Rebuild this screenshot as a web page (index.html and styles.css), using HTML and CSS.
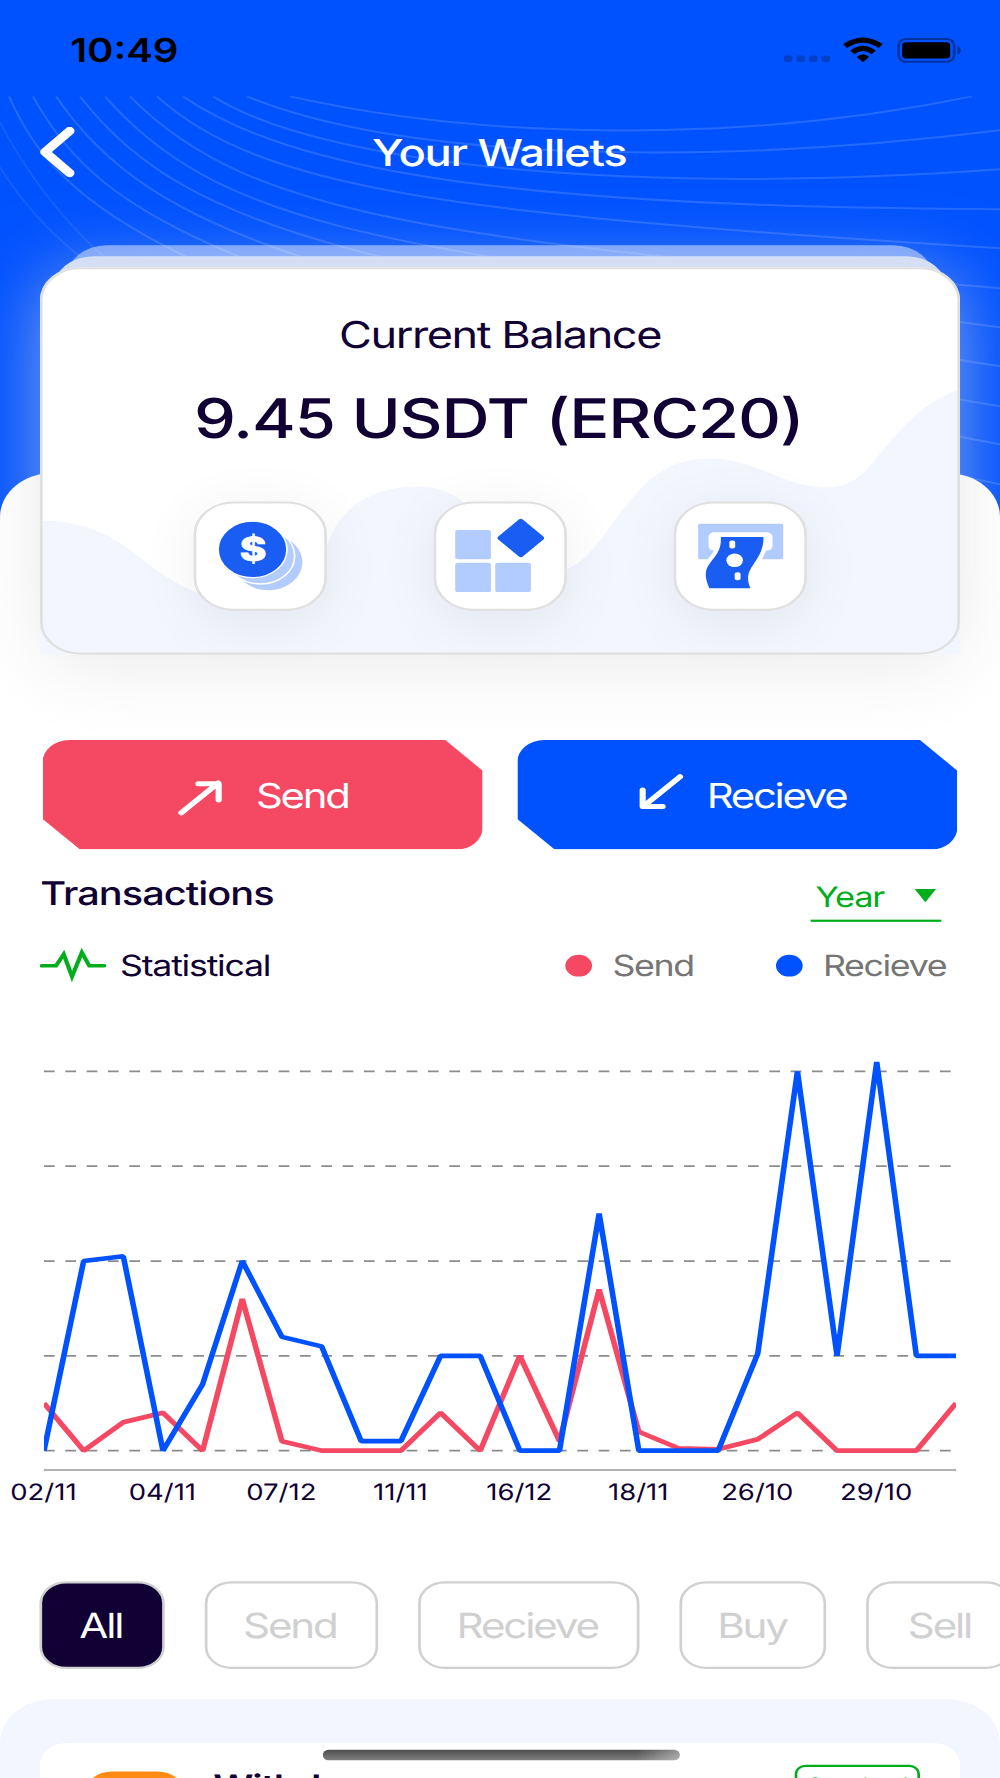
FILE: index.html
```html
<!DOCTYPE html>
<html lang="en">

<head>
    <meta charset="UTF-8">
    <meta name="viewport" content="width=device-width, initial-scale=1.0">
    <title>Your Wallets</title>

    <link rel="stylesheet" href="styles.css">
</head>

<body>
    <div class="app">
        <svg class="pattern" viewBox="0 97 1000 430" preserveAspectRatio="none">
            <path d="M290 97 C480 140 740 145 972 97" />
            <path d="M247 97 C400 160 700 168 1000 131" />
            <path d="M213 97 C330 170 650 195 1000 170" />
            <path d="M183 97 C290 170 500 208 1000 210" />
            <path d="M157 97 C260 190 450 215 1000 249" />
            <path d="M130 97 C250 220 450 240 1000 289" />
            <path d="M105 97 C230 240 420 250 1000 328" />
            <path d="M80 97 C190 240 380 270 1000 367" />
            <path d="M56 97 C150 235 320 290 1000 407" />
            <path d="M33 97 C100 220 230 300 1000 445" />
            <path d="M9 97 C60 210 160 310 1000 485" />
            <path class="faint" d="M0 123 C30 180 70 230 110 262" />
            <path class="faint" d="M0 168 C20 200 50 235 90 265" />
        </svg>

        <div class="statusbar">
            <span class="time">10:49</span>
            <svg class="status-icons" width="68" height="14" viewBox="0 0 68 14">
                <g opacity=".22">
                    <rect x="1" y="9.3" width="3.1" height="3" rx=".8" />
                    <rect x="5.7" y="9.3" width="3.1" height="3" rx=".8" />
                    <rect x="10.4" y="9.3" width="3.1" height="3" rx=".8" />
                    <rect x="15.1" y="9.3" width="3.1" height="3" rx=".8" />
                </g>
                <g fill="none" stroke="#000" stroke-width="2.3">
                    <path d="M23.9 5 Q30.6 -0.4 37.3 5" />
                    <path d="M26.6 7.9 Q30.6 4.3 34.6 7.9" />
                </g>
                <path d="M28.3 10 Q30.6 7.6 32.9 10 L30.6 12.4Z" />
                <rect x="44" y="1.8" width="20.8" height="10.4" rx="2.9" fill="none" stroke="#000" stroke-opacity=".38" />
                <rect x="45.3" y="3.3" width="18" height="7.4" rx="1.4" />
                <path d="M66 5 Q67.3 5.6 67.3 7 Q67.3 8.4 66 9Z" opacity=".4" />
            </svg>
        </div>

        <div class="nav">
            <svg class="back" width="14" height="24" viewBox="0 0.7 14 24">
                <path d="M11.1 2.5 L1.9 12.1 L11.1 21.7" />
            </svg>
            <span class="title">Your Wallets</span>
        </div>

        <div class="sheet">
            <!-- balance card -->
            <div class="stack">
                <div class="layer layer-back"></div>
                <div class="layer layer-mid"></div>
                <div class="card">
                    <svg class="wave" viewBox="0 0 920 269" preserveAspectRatio="none">
                        <path d="M0 135 C45 135 75 150 110 180 C140 203 180 220 220 220 C260 220 275 195 287 160 C300 120 335 101 377 101 C450 101 450 184 510 187 C570 187 580 73 668 73 C720 73 740 102 787 102 C840 102 840 35 920 3 V269 H0Z" />
                    </svg>
                    <div class="label">Current Balance</div>
                    <div class="amount">9.45 USDT (ERC20)</div>
                    <div class="tools">
                        <div class="tool">
                            <svg width="50" height="50" viewBox="-.4 0 50 50">
                                <circle class="light" cx="27.6" cy="27.8" r="12.8" />
                                <circle class="light ring" cx="24.7" cy="24.9" r="12.8" />
                                <circle class="dark ring" cx="21.7" cy="21.9" r="12.9" />
                                <text x="21.9" y="27.4" class="dollar">$</text>
                            </svg>
                        </div>
                        <div class="tool">
                            <svg width="50" height="50" viewBox="-.4 0 50 50">
                                <rect class="light" x="7.7" y="13" width="13.4" height="13.4" rx="1" />
                                <rect class="light" x="7.7" y="28" width="13.4" height="13.4" rx="1" />
                                <rect class="light" x="22.7" y="28" width="13.4" height="13.4" rx="1" />
                                <rect class="dark" x="25.8" y="10.2" width="13" height="13" rx="1.2" transform="rotate(45 32.3 16.7)" />
                            </svg>
                        </div>
                        <div class="tool">
                            <svg width="50" height="50" viewBox="-.4 0 50 50">
                                <rect class="light" x="8.8" y="10.2" width="31.9" height="16.2" rx=".7" />
                                <rect x="12.7" y="14.2" width="24" height="8.2" rx="2" fill="#fff" />
                                <path class="halo" d="M17.3 16.3 H33.3 C33.5 28 24.8 30 28.4 39.6 H13 C8.2 27 18 28 17.3 16.3Z" />
                                <rect x="14" y="14.2" width="21" height="2" fill="#fff" />
                                <path class="dark" d="M17.3 16.2 H33.3 C33.5 28 24.8 30 28.4 39.6 H13 C8.2 27 18 28 17.3 16.2Z" />
                                <g fill="#fff">
                                    <circle cx="22.5" cy="26.9" r="3.1" />
                                    <rect x="20.5" y="17.8" width="2.2" height="3.7" rx="1" />
                                    <rect x="22.5" y="32.3" width="2.2" height="3.7" rx="1" />
                                </g>
                            </svg>
                        </div>
                    </div>
                </div>
            </div>

            <div class="actions">
                <div class="action send">
                    <svg width="18" height="17" viewBox="0 0 18 17">
                        <path d="M2 15.2 L15.8 1.6 M8.4 1.9 H16 V9.4" />
                    </svg>
                    <span>Send</span>
                </div>
                <div class="action recieve">
                    <svg width="18" height="17" viewBox="0 0 18 17">
                        <path d="M16 1.7 L2.2 15.3 M2 7.8 V15.3 H9.5" />
                    </svg>
                    <span>Recieve</span>
                </div>
            </div>

            <div class="row head">
                <span class="heading">Transactions</span>
                <span class="select">
                    <span class="period">Year</span>
                    <i class="caret"></i>
                </span>
            </div>

            <div class="row legend">
                <svg class="pulse" width="25" height="16" viewBox="0 0 25 16">
                    <path d="M.7 8.1 H6 L8.9 2.8 L12 13 L15.7 2 L18.5 8.1 H24.1" />
                </svg>
                <span class="statistical">Statistical</span>
                <span class="key key-send"><i class="dot dot-send"></i><span>Send</span></span>
                <span class="key key-recieve"><i class="dot dot-recieve"></i><span>Recieve</span></span>
            </div>

            <svg class="chart" id="chart" width="375" height="210" viewBox="0 0 375 210"></svg>

            <div class="filters">
                <span class="chip all active">All</span>
                <span class="chip send-chip">Send</span>
                <span class="chip recieve-chip">Recieve</span>
                <span class="chip buy">Buy</span>
                <span class="chip sell">Sell</span>
            </div>

            <div class="history">
                <div class="item">
                    <div class="coin"></div>
                    <span class="type">Withdraw</span>
                    <span class="badge"><span>Completed</span></span>
                </div>
            </div>
        </div>

        <div class="home"></div>
    </div>

    <script>

        const chart = document.getElementById("chart");

        let recieve = [0, 40, 41, 0, 14, 40, 24, 22, 2, 2, 20, 20, 0, 0, 50, 0, 0, 0, 20.5, 80, 20, 82, 20, 20];
        let send = [10, 0, 6, 8, 0, 32, 2, 0, 0, 0, 8, 0, 20, 2, 34, 4, 0.5, 0.3, 2.4, 8, 0, 0, 0, 10];
        let labels = ["02/11", "04/11", "07/12", "11/11", "16/12", "18/11", "26/10", "29/10"];

        const left = 16.5;
        const step = 14.87;
        const base = 182.5;

        const y = (value) => base - value * 2.165;
        const points = (data) => data.map((v, i) => `${left + i * step},${y(v)}`).join(" ");

        let content = "";

        for (let v = 0; v <= 80; v += 20) {
            content += `<line class="grid" x1="${left}" x2="358.5" y1="${y(v)}" y2="${y(v)}" />`;
        }
        content += `<line class="axis" x1="${left}" x2="358.5" y1="191.3" y2="191.3" />`;

        content += `<clipPath id="plot"><rect x="${left}" y="0" width="342" height="210" /></clipPath>`;
        content += `<g clip-path="url(#plot)">`;
        content += `<polyline class="line line-send" points="${points(send)}" />`;
        content += `<polyline class="line line-recieve" points="${points(recieve)}" />`;
        content += `</g>`;

        // one label for every third point
        labels.forEach((label, i) => {
            content += `<text class="tick" x="${left - 0.2 + i * 3 * step}" y="205">${label}</text>`;
        });

        chart.innerHTML = content;

    </script>
</body>

</html>
```
FILE: styles.css
```css
* {
    box-sizing: border-box;
}

body {
    margin: 0;
    width: 1000px;
    height: 1778px;
    overflow: hidden;
    font-family: Inter, "Liberation Sans", sans-serif;
    text-rendering: geometricPrecision;
}

/* 375 x 812 screen stretched to the window */
.app {
    position: relative;
    width: 375px;
    height: 812px;
    overflow: hidden;
    background-color: #0052ff;
    color: #110033;
    transform: scale(2.66667, 2.18966);
    transform-origin: 0 0;
}

.pattern {
    position: absolute;
    top: 44.3px;
    left: 0;
    width: 375px;
    height: 196.4px;
    fill: none;
    stroke: rgba(255, 255, 255, 0.14);
    stroke-width: 2;
}

.faint {
    stroke: rgba(255, 255, 255, 0.08);
}

.statusbar {
    position: relative;
    height: 44px;
    display: flex;
    justify-content: space-between;
    padding: 0 14px 0 26.3px;
}

.time {
    color: #000;
    font-size: 15px;
    font-weight: 600;
    line-height: 46.8px;
    transform: translateY(0.5px);
}

.status-icons {
    margin-top: 16.3px;
}

.nav {
    position: relative;
    height: 51px;
    display: flex;
    align-items: center;
    justify-content: center;
}

.back {
    position: absolute;
    left: 15px;
    top: 13.7px;
    fill: none;
    stroke: #fff;
    stroke-width: 3.7;
    stroke-linecap: round;
    stroke-linejoin: round;
}

.title {
    margin-top: 1.2px;
    color: #fff;
    font-size: 17px;
    font-weight: 500;
    letter-spacing: -0.48px;
    transform: translate(-0.3px, 0.7px);
}

.sheet {
    position: relative;
    margin-top: 120.9px;
    height: 620px;
    background-color: #fff;
    border-radius: 20px 20px 0 0;
}

.stack {
    position: relative;
    top: -104px;
    margin: 0 15px -104px;
    padding-top: 10.5px;
}

.layer {
    position: absolute;
    height: 40px;
    border-radius: 15px;
}

.layer-back {
    top: 0;
    left: 10px;
    right: 10px;
    background-color: rgba(255, 255, 255, 0.47);
}

.layer-mid {
    top: 5px;
    left: 5px;
    right: 5px;
    background-color: #d3dffa;
}

.card {
    position: relative;
    isolation: isolate;
    height: 176.3px;
    padding: 1px;
    border-radius: 15px;
    background-color: #fff;
    box-shadow: 0 4px 30px rgba(220, 220, 220, 0.6);
    display: flex;
    flex-direction: column;
    align-items: center;
}

/* the outline stays above the wave, the wave keeps its square corners */
.card::after {
    content: "";
    position: absolute;
    inset: 0;
    border: 1px solid #e0e0e0;
    border-radius: 15px;
}

.wave {
    position: absolute;
    left: 0;
    bottom: 0;
    width: 345px;
    height: 122.9px;
    z-index: -1;
    fill: #f3f6ff;
}

.label {
    margin-top: 20.4px;
    height: 20px;
    font-size: 16.9px;
    line-height: 20px;
    letter-spacing: -0.53px;
    white-space: nowrap;
}

.amount {
    margin-top: 12.8px;
    height: 30px;
    font-size: 25px;
    font-weight: 500;
    line-height: 30px;
    letter-spacing: -0.43px;
    white-space: nowrap;
    transform: translate(-0.5px, 0.2px);
}

.tools {
    display: flex;
    gap: 40px;
    margin-top: 22.4px;
    transform: translateX(-0.4px);
}

.tool {
    width: 50px;
    height: 50px;
    border: 1px solid #e0e0e0;
    border-radius: 15px;
    background-color: #fff;
    box-shadow: 0 5px 25px rgba(0, 0, 0, 0.07);
}

.tool svg {
    display: block;
    margin: -1px;
}

.light {
    fill: #b3ccff;
}

.dark {
    fill: #195df2;
}

.ring {
    stroke: #fff;
    stroke-width: 0.6;
}

.halo {
    fill: #fff;
    stroke: #fff;
    stroke-width: 3.4;
}

.dollar {
    fill: #fff;
    font-size: 15.3px;
    font-weight: 900;
    text-anchor: middle;
}

.actions {
    display: flex;
    gap: 13px;
    margin-top: 39.3px;
    padding: 0 16px;
}

.action {
    width: 165px;
    height: 50px;
    display: flex;
    align-items: center;
    border-radius: 10px;
    clip-path: polygon(0 0, 151px 0, 100% 14px, 100% 100%, 14px 100%, 0 36px);
    color: #fff;
    font-size: 15.7px;
    letter-spacing: -0.84px;
}

.action span {
    padding-top: 2px;
}

.action svg {
    fill: none;
    stroke: #fff;
    stroke-width: 2.3;
    stroke-linecap: round;
    stroke-linejoin: round;
}

.send {
    background-color: #f54862;
    padding-left: 50px;
}

.send svg {
    margin: 4px 12px 0 0;
}

.recieve {
    background-color: #0052ff;
    padding-left: 45px;
}

.recieve svg {
    margin: -3px 8px 0 0;
}

.row {
    display: flex;
    align-items: center;
}

.head {
    justify-content: space-between;
    height: 33.5px;
    padding: 0 22px 0 15.1px;
}

.heading {
    margin-top: 5.6px;
    font-size: 14.9px;
    font-weight: 500;
    letter-spacing: -0.36px;
    transform: translateY(0.4px);
}

.select {
    display: flex;
    align-items: center;
    justify-content: space-between;
    width: 48.8px;
    height: 22px;
    margin-top: 10.6px;
    padding: 0 1.8px 2px 1.6px;
    border-bottom: 1px solid #00ae1c;
    color: #00ae1c;
    font-size: 12.9px;
    letter-spacing: -0.45px;
}

.period {
    margin-top: 3.4px;
}

.caret {
    border-left: 4.5px solid transparent;
    border-right: 4.5px solid transparent;
    border-top: 6px solid #00ae1c;
}

.legend {
    height: 39px;
    padding-left: 15px;
    font-size: 13.4px;
    letter-spacing: -0.5px;
}

.legend span span,
.statistical {
    padding-top: 1.6px;
    transform: translateY(-0.2px);
}

.pulse {
    fill: none;
    stroke: #00ae1c;
    stroke-width: 1.6;
    stroke-linecap: round;
}

.statistical {
    margin-left: 5px;
    width: 166.7px;
    letter-spacing: -0.46px;
}

.key {
    display: flex;
    align-items: center;
    color: #757575;
}

.key-send {
    width: 78.9px;
}

.dot {
    width: 10px;
    height: 10px;
    margin-right: 8px;
    border-radius: 50%;
}

.dot-send {
    background-color: #f54862;
}

.dot-recieve {
    background-color: #0052ff;
}

.chart {
    display: block;
    margin-top: 19.5px;
}

.grid {
    stroke: #8c8c8c;
    stroke-width: 0.8;
    stroke-dasharray: 4 4;
}

.axis {
    stroke: #b3b3b3;
    stroke-width: 0.9;
}

.line {
    fill: none;
    stroke-width: 2.1;
    stroke-linejoin: bevel;
}

.line-send {
    stroke: #f54862;
}

.line-recieve {
    stroke: #0052ff;
}

.tick {
    fill: #110033;
    font-size: 10.3px;
    text-anchor: middle;
}

.filters {
    display: flex;
    gap: 15px;
    margin-top: 32.4px;
    padding-left: 15px;
    transform: translate(-0.2px, 0.2px);
}

.chip {
    flex: none;
    height: 40px;
    border: 1px solid #d0d0d0;
    border-radius: 10px;
    color: #d0d0d0;
    font-size: 15.8px;
    line-height: 40px;
    letter-spacing: -0.82px;
    text-indent: -0.8px;
    text-align: center;
}

.active {
    background-color: #110033;
    color: #fff;
}

.all {
    width: 46.8px;
}

.send-chip {
    width: 65px;
}

.recieve-chip {
    width: 83px;
}

.buy {
    width: 55.6px;
}

.sell {
    width: 55px;
}

.history {
    height: 60px;
    margin-top: 13.4px;
    padding: 20px 15px 0;
    background-color: #f3f6ff;
    border-radius: 20px 20px 0 0;
}

.item {
    display: flex;
    align-items: flex-start;
    height: 60px;
    padding: 13.1px 15px 0 16.6px;
    background-color: #fff;
    border-radius: 10px;
}

.coin {
    width: 37px;
    height: 37px;
    border-radius: 10px;
    background-color: #ff8a14;
}

.type {
    margin: -1.9px auto 0 11.4px;
    font-size: 14.8px;
    font-weight: 600;
    letter-spacing: -0.5px;
}

.badge {
    width: 47px;
    height: 20px;
    margin-top: -3.2px;
    border: 1px solid #00ae1c;
    border-radius: 4px;
    color: #00ae1c;
    font-size: 7.8px;
    line-height: 14.9px;
    letter-spacing: -0.3px;
    text-align: center;
}

.badge span {
    display: block;
    transform: translateY(0.6px);
}

.home {
    position: absolute;
    left: 120.5px;
    bottom: 8px;
    width: 134.3px;
    height: 5.3px;
    border-radius: 2.6px;
    background: linear-gradient(to right, rgba(255, 255, 255, 0) 88%, rgba(255, 255, 255, 0.4)), linear-gradient(#4d4d4d, #808080);
}
```
